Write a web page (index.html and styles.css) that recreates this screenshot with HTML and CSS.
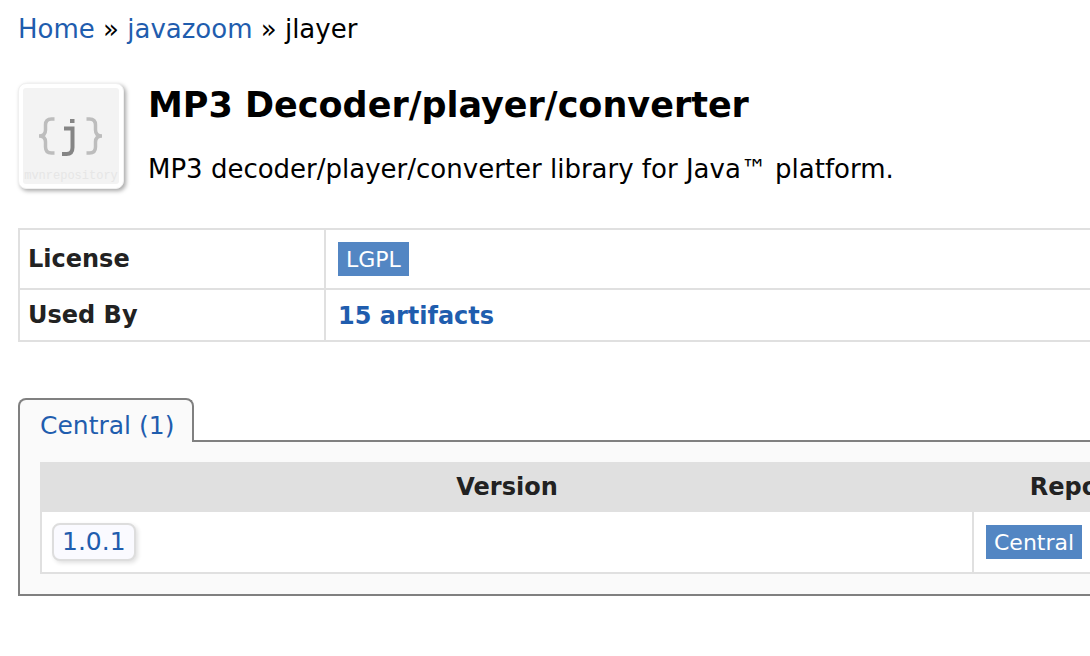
FILE: index.html
```html
<!DOCTYPE html>
<html lang="en">
<head>
<meta charset="utf-8">
<title>MP3 Decoder/player/converter</title>
<link rel="stylesheet" href="styles.css">
</head>
<body>
<main class="page">
  <nav class="breadcrumb" aria-label="Breadcrumb"><a href="#home">Home</a> » <a href="#javazoom">javazoom</a> » jlayer</nav>
  <header class="artifact">
    <svg class="logo" viewBox="0 0 96 96" role="img" aria-label="mvnrepository">
      <rect width="96" height="96" fill="#f3f3f3"/>
      <g fill="none" stroke="#bdbdbd" stroke-width="3.500">
        <path d="M31.500 31h-3q-6 0-6 6v5q0 6-6.500 6 6.500 0 6.500 6v5q0 6 6 6h3"/>
        <path d="M63.500 31h3q6 0 6 6v5q0 6 6.500 6-6.500 0-6.500 6v5q0 6-6 6h-3"/>
      </g>
      <path d="M41 40.500h8.500v19q0 6.500-6 6.500H39" fill="none" stroke="#858585" stroke-width="4"/>
      <rect x="47" y="31" width="4.500" height="4" fill="#858585"/>
      <text class="logo-name" x="48" y="91" text-anchor="middle">mvnrepository</text>
    </svg>
    <div class="summary">
      <h1 class="title">MP3 Decoder/player/converter</h1>
      <p class="description">MP3 decoder/player/converter library for Java™ platform.</p>
    </div>
  </header>
  <table class="grid info">
    <colgroup><col class="col-label"><col></colgroup>
    <tbody>
      <tr class="row-license"><th scope="row">License</th><td><span class="badge">LGPL</span></td></tr>
      <tr class="row-used"><th scope="row">Used By</th><td><a class="strong" href="#artifacts">15 artifacts</a></td></tr>
    </tbody>
  </table>
  <ul class="tabs"><li class="tab"><a href="#central">Central (1)</a></li></ul>
  <section class="panel" id="central">
    <table class="grid versions">
      <colgroup><col class="col-version"><col></colgroup>
      <thead><tr><th scope="col">Version</th><th scope="col">Repository</th></tr></thead>
      <tbody><tr><td><a class="version" href="#1.0.1">1.0.1</a></td><td><a class="badge" href="#repo">Central</a></td></tr></tbody>
    </table>
  </section>
</main>
</body>
</html>
```
FILE: styles.css
```css
* { box-sizing: border-box; }

body {
  margin: 0;
  overflow-x: hidden;
  background: #fff;
  color: #000;
  font: 26px/32px "DejaVu Sans", Verdana, sans-serif;
}

a { color: #1f5dae; text-decoration: none; }

.page { min-width: 1274px; padding: 13px 18px; }

.artifact { display: flex; gap: 24px; margin-top: 37px; }

.logo {
  flex: none;
  width: 106px;
  height: 106px;
  margin-top: 1px;
  padding: 4px;
  border: 1px solid #f0f0f0;
  border-radius: 8px;
  background: #fff;
  box-shadow: 2px 2px 4px rgba(0, 0, 0, 0.35);
}

.logo-name { fill: #e6e6e6; font: 12px "Liberation Mono", monospace; }

.title { margin: 1px 0 0; font-size: 35px; line-height: 44px; }

.description { margin: 26px 0 0; }

.grid {
  width: 100%;
  table-layout: fixed;
  border-collapse: collapse;
  background: #fff;
}

.grid th, .grid td { padding: 0 12px; border: 2px solid #e0e0e0; text-align: left; }
.grid th { color: #222; font-size: 24px; }

.info { margin-top: 39px; }
.info th { padding-left: 8px; }
.col-label { width: 306px; }
.row-license { height: 60px; }
.row-used { height: 52px; }
.strong { font-size: 24px; font-weight: bold; }

.badge {
  display: block;
  width: max-content;
  padding: 2px 8px 0;
  background: #5386c3;
  color: #fff;
  font-size: 22px;
}

.tabs { display: flex; margin: 56px 0 0; padding: 0; list-style: none; }

.tab {
  z-index: 1;
  height: 44px;
  margin-bottom: -2px;
  padding: 10px 18px 0 20px;
  border: 2px solid #808080;
  border-bottom: 0;
  border-radius: 8px 8px 0 0;
  background: #fafafa;
  font-size: 25px;
}

.panel { padding: 20px; border: 2px solid #808080; background: #fafafa; }

.versions thead { background: #e0e0e0; }
.versions thead tr { height: 48px; }
.versions tbody tr { height: 62px; }
.versions thead th { text-align: center; }
.versions tbody td:first-child { padding: 0 10px; }
.col-version { width: 932px; }

.version {
  display: block;
  width: max-content;
  padding: 1px 8px;
  border: 2px solid #ddd;
  border-radius: 8px;
  background: #fafaff;
  box-shadow: 2px 2px 4px rgba(0, 0, 0, 0.12);
  font-size: 25px;
}
```
